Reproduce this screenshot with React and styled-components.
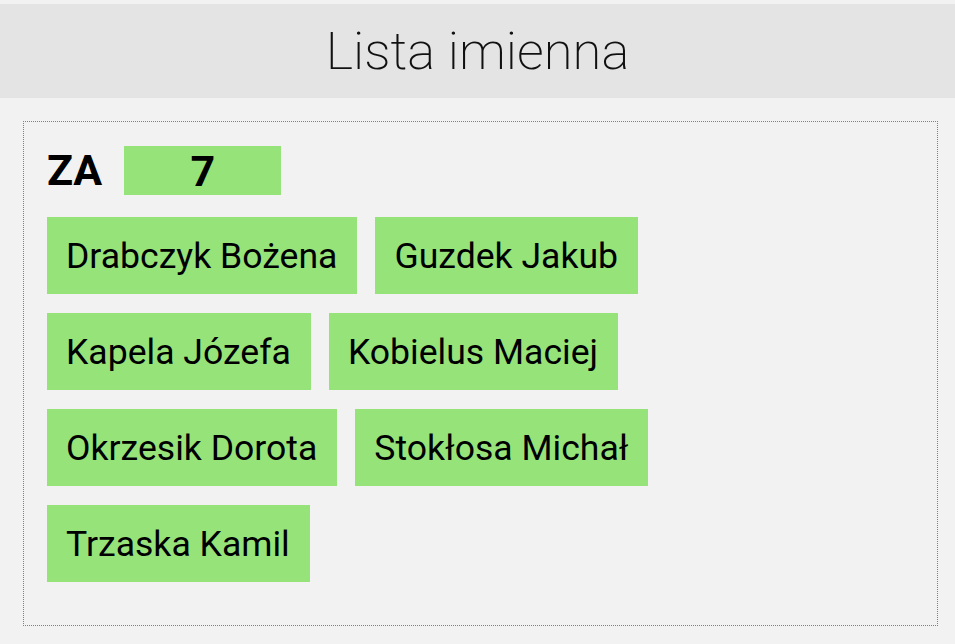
import React from "react";
import styled, { createGlobalStyle } from "styled-components";

const GlobalStyle = createGlobalStyle`
  html, body {
    margin: 0;
    padding: 0;
    background: #f2f2f2;
    font-family: Roboto, "Liberation Sans", sans-serif;
    color: #000;
  }
`;

const Page = styled.div`
  padding-top: 4px;
`;

const Header = styled.header`
  height: 94px;
  background: #e4e4e4;
  display: flex;
  align-items: center;
  justify-content: center;
`;

const Title = styled.h1`
  margin: 0;
  font-size: 52.5px;
  font-weight: 200;
  color: #111;
`;

const Panel = styled.section`
  margin: 23px 17px 0 23px;
  border: 1px dotted #808080;
  padding: 24px 23px 43px 23px;
`;

const VoteRow = styled.div`
  display: flex;
  align-items: center;
  gap: 22px;
`;

const VoteLabel = styled.span`
  font-size: 43px;
  font-weight: 700;
  line-height: 49px;
`;

const VoteCount = styled.span`
  width: 157px;
  height: 49px;
  background: #96e37a;
  display: flex;
  align-items: center;
  justify-content: center;
  font-size: 43px;
  font-weight: 700;
`;

const NameList = styled.div`
  display: flex;
  flex-direction: column;
  gap: 19px;
  margin-top: 22px;
`;

const NameRow = styled.div`
  display: flex;
  gap: 18px;
`;

const Chip = styled.div`
  height: 77px;
  padding: 0 20px 0 19px;
  background: #96e37a;
  display: flex;
  align-items: center;
  font-size: 35.6px;
  font-weight: 400;
  white-space: nowrap;
`;

const names = [
  ["Drabczyk Bożena", "Guzdek Jakub"],
  ["Kapela Józefa", "Kobielus Maciej"],
  ["Okrzesik Dorota", "Stokłosa Michał"],
  ["Trzaska Kamil"],
];

export default function App() {
  return (
    <Page>
      <GlobalStyle />
      <Header>
        <Title>Lista imienna</Title>
      </Header>
      <Panel>
        <VoteRow>
          <VoteLabel>ZA</VoteLabel>
          <VoteCount>7</VoteCount>
        </VoteRow>
        <NameList>
          {names.map((row, i) => (
            <NameRow key={i}>
              {row.map((n) => (
                <Chip key={n}>{n}</Chip>
              ))}
            </NameRow>
          ))}
        </NameList>
      </Panel>
    </Page>
  );
}
